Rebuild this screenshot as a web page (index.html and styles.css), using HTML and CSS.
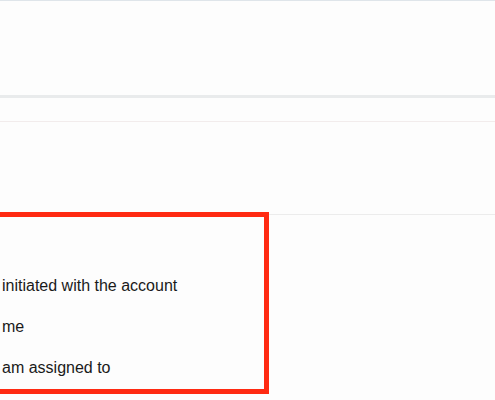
FILE: index.html
```html
<!DOCTYPE html>
<html>
<head>
<meta charset="utf-8">
<link rel="stylesheet" href="styles.css">
</head>
<body>
<div class="page">
  <div class="header"></div>
  <div class="shadow"></div>
  <div class="subbar"></div>
  <div class="section"></div>
  <div class="options">
    <div class="opt">initiated with the account</div>
    <div class="opt">me</div>
    <div class="opt">am assigned to</div>
    <div class="highlight"></div>
  </div>
</div>
</body>
</html>
```
FILE: styles.css
```css
html, body {
  margin: 0;
  padding: 0;
  background: #fdfdfd;
}
.page {
  width: 495px;
  height: 400px;
  overflow: hidden;
  font-family: "Liberation Sans", Arial, sans-serif;
  color: #1a1a1a;
}
.header {
  height: 94px;
  border-top: 1px solid #dfe5ea;
  background: #fdfdfd;
}
.shadow {
  height: 3px;
  background: #e9ebec;
}
.subbar {
  height: 23px;
  border-bottom: 1px solid #f2ecec;
}
.section {
  height: 92px;
  border-bottom: 1px solid #ececec;
}
.options {
  position: relative;
  padding-top: 62px;
  padding-left: 2px;
  font-size: 16px;
}
.opt {
  height: 41px;
  line-height: 17px;
}
.highlight {
  position: absolute;
  left: -10px;
  top: -3px;
  width: 279px;
  height: 182px;
  border: 5px solid #ff2a12;
  box-sizing: border-box;
}
```
